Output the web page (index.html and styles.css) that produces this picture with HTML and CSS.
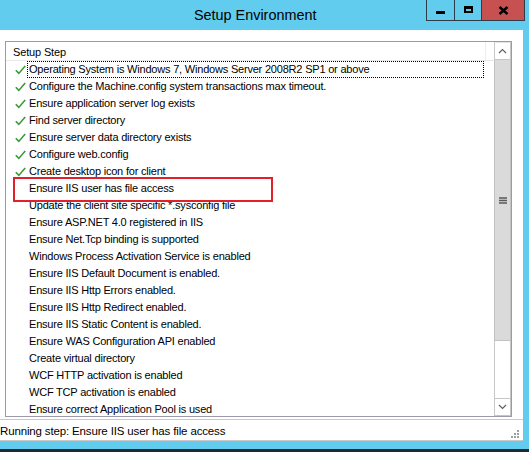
FILE: index.html
```
<!DOCTYPE html>
<html>
<head>
<meta charset="utf-8">
<link rel="stylesheet" href="styles.css">
</head>
<body>
<div class="window">
  <div class="titlebar">
    <div class="title">Setup Environment</div>
    <div class="caption-buttons">
      <div class="cbtn cbtn-min"><span class="min-glyph"></span></div>
      <div class="cbtn cbtn-max"><span class="max-glyph"></span></div>
      <div class="cbtn cbtn-close">
        <svg width="11" height="9" viewBox="0 0 11 9"><path d="M1.5 1 L9.5 8 M9.5 1 L1.5 8" stroke="#000" stroke-width="2.4" fill="none"/></svg>
      </div>
    </div>
  </div>
  <div class="client">
    <div class="listbox">
      <div class="list-main">
        <div class="header"><span class="header-text">Setup Step</span><span class="header-div"></span></div>
        <div class="rows">
          <div class="row"><span class="icon"><svg class="chk" width="11" height="10" viewBox="0 0 11 10"><path d="M0.8 5.2 L3.8 8.4 L10.2 1" stroke="#3a9a3a" stroke-width="1.6" fill="none"/></svg></span><span class="label focus">Operating System is Windows 7, Windows Server 2008R2 SP1 or above</span></div>
          <div class="row"><span class="icon"><svg class="chk" width="11" height="10" viewBox="0 0 11 10"><path d="M0.8 5.2 L3.8 8.4 L10.2 1" stroke="#3a9a3a" stroke-width="1.6" fill="none"/></svg></span><span class="label">Configure the Machine.config system transactions max timeout.</span></div>
          <div class="row"><span class="icon"><svg class="chk" width="11" height="10" viewBox="0 0 11 10"><path d="M0.8 5.2 L3.8 8.4 L10.2 1" stroke="#3a9a3a" stroke-width="1.6" fill="none"/></svg></span><span class="label">Ensure application server log exists</span></div>
          <div class="row"><span class="icon"><svg class="chk" width="11" height="10" viewBox="0 0 11 10"><path d="M0.8 5.2 L3.8 8.4 L10.2 1" stroke="#3a9a3a" stroke-width="1.6" fill="none"/></svg></span><span class="label">Find server directory</span></div>
          <div class="row"><span class="icon"><svg class="chk" width="11" height="10" viewBox="0 0 11 10"><path d="M0.8 5.2 L3.8 8.4 L10.2 1" stroke="#3a9a3a" stroke-width="1.6" fill="none"/></svg></span><span class="label">Ensure server data directory exists</span></div>
          <div class="row"><span class="icon"><svg class="chk" width="11" height="10" viewBox="0 0 11 10"><path d="M0.8 5.2 L3.8 8.4 L10.2 1" stroke="#3a9a3a" stroke-width="1.6" fill="none"/></svg></span><span class="label">Configure web.config</span></div>
          <div class="row"><span class="icon"><svg class="chk" width="11" height="10" viewBox="0 0 11 10"><path d="M0.8 5.2 L3.8 8.4 L10.2 1" stroke="#3a9a3a" stroke-width="1.6" fill="none"/></svg></span><span class="label">Create desktop icon for client</span></div>
          <div class="row"><span class="icon"></span><span class="label">Ensure IIS user has file access</span></div>
          <div class="row"><span class="icon"></span><span class="label">Update the client site specific *.sysconfig file</span></div>
          <div class="row"><span class="icon"></span><span class="label">Ensure ASP.NET 4.0 registered in IIS</span></div>
          <div class="row"><span class="icon"></span><span class="label">Ensure Net.Tcp binding is supported</span></div>
          <div class="row"><span class="icon"></span><span class="label">Windows Process Activation Service is enabled</span></div>
          <div class="row"><span class="icon"></span><span class="label">Ensure IIS Default Document is enabled.</span></div>
          <div class="row"><span class="icon"></span><span class="label">Ensure IIS Http Errors enabled.</span></div>
          <div class="row"><span class="icon"></span><span class="label">Ensure IIS Http Redirect enabled.</span></div>
          <div class="row"><span class="icon"></span><span class="label">Ensure IIS Static Content is enabled.</span></div>
          <div class="row"><span class="icon"></span><span class="label">Ensure WAS Configuration API enabled</span></div>
          <div class="row"><span class="icon"></span><span class="label">Create virtual directory</span></div>
          <div class="row"><span class="icon"></span><span class="label">WCF HTTP activation is enabled</span></div>
          <div class="row"><span class="icon"></span><span class="label">WCF TCP activation is enabled</span></div>
          <div class="row"><span class="icon"></span><span class="label">Ensure correct Application Pool is used</span></div>
        </div>
      </div>
      <div class="scrollbar">
        <div class="sb-btn sb-up"><svg width="9" height="6" viewBox="0 0 9 6"><path d="M1 5 L4.5 1.5 L8 5" stroke="#606060" stroke-width="1.2" fill="none"/></svg></div>
        <div class="sb-thumb"><svg width="8" height="7" viewBox="0 0 8 7"><path d="M0 1 H8 M0 3.5 H8 M0 6 H8" stroke="#5a5a5a" stroke-width="1.3"/></svg></div>
        <div class="sb-track"></div>
        <div class="sb-btn sb-down"><svg width="9" height="6" viewBox="0 0 9 6"><path d="M1 1 L4.5 4.5 L8 1" stroke="#606060" stroke-width="1.2" fill="none"/></svg></div>
      </div>
    </div>
    <div class="status">
      <span class="status-text">Running step: Ensure IIS user has file access</span>
      <svg class="grip" width="9" height="9" viewBox="0 0 9 9"><g fill="#a0a0a0"><rect x="6" y="0" width="2" height="2"/><rect x="3" y="3" width="2" height="2"/><rect x="6" y="3" width="2" height="2"/><rect x="0" y="6" width="2" height="2"/><rect x="3" y="6" width="2" height="2"/><rect x="6" y="6" width="2" height="2"/></g></svg>
    </div>
  </div>
  <div class="frame-bottom"></div>
  <div class="edge-dark"></div>
  <div class="annotation"></div>
</div>
</body>
</html>
```
FILE: styles.css
```
html, body {
  margin: 0;
  padding: 0;
}
body {
  width: 529px;
  height: 452px;
  overflow: hidden;
  font-family: "Liberation Sans", Arial, sans-serif;
  color: #000;
}
.window {
  position: relative;
  width: 529px;
  height: 452px;
  background: #62ccef;
  display: flex;
  flex-direction: column;
}
.titlebar {
  height: 30px;
  display: flex;
  align-items: flex-start;
  flex: none;
}
.title {
  margin-left: 194px;
  margin-top: 6px;
  font-size: 14.4px;
  line-height: 18px;
  color: #000;
}
.caption-buttons {
  margin-left: auto;
  margin-right: 4px;
  display: flex;
  height: 21px;
  box-sizing: border-box;
  border: 1px solid #2e3b48;
  border-top: none;
}
.cbtn {
  display: flex;
  align-items: center;
  justify-content: center;
  height: 20px;
  box-sizing: border-box;
}
.cbtn-min {
  width: 28px;
  border-right: 1px solid #2e3b48;
}
.cbtn-max {
  width: 27px;
  border-right: 1px solid #2e3b48;
}
.cbtn-close {
  width: 42px;
  background: #c75050;
}
.min-glyph {
  display: block;
  width: 9px;
  height: 3px;
  background: #000;
  margin-top: 5px;
}
.max-glyph {
  display: block;
  width: 9px;
  height: 7px;
  box-sizing: border-box;
  border: 2px solid #000;
  border-top-width: 3px;
  margin-top: -2px;
}
.client {
  width: 523px;
  height: 411px;
  background: #fff;
  flex: none;
  box-sizing: border-box;
  padding-top: 11px;
  display: flex;
  flex-direction: column;
}
.listbox {
  margin-left: 5px;
  width: 507px;
  height: 376px;
  box-sizing: border-box;
  border: 1px solid #9c99ad;
  display: flex;
  overflow: hidden;
}
.list-main {
  width: 488px;
  flex: none;
  overflow: hidden;
}
.header {
  height: 19px;
  box-sizing: border-box;
  border-bottom: 1px solid #e8e8e8;
  display: flex;
  align-items: center;
  font-size: 11px;
  letter-spacing: -0.15px;
}
.header-text {
  margin-left: 7px;
  margin-top: 2px;
}
.header-div {
  margin-left: auto;
  margin-right: 8px;
  width: 1px;
  height: 18px;
  background: #ececec;
}
.rows {
  display: flex;
  flex-direction: column;
}
.row {
  height: 17px;
  display: flex;
  align-items: center;
  font-size: 11px;
  letter-spacing: -0.2px;
  white-space: nowrap;
}
.icon {
  width: 21px;
  height: 17px;
  flex: none;
  display: flex;
  align-items: center;
}
.chk {
  margin-left: 9px;
  margin-top: 1px;
}
.label {
  padding-left: 2px;
  height: 17px;
  line-height: 17px;
  box-sizing: border-box;
}
.label.focus {
  border: 1px dotted #000;
  padding-left: 1px;
  width: 457px;
  line-height: 15px;
}
.scrollbar {
  width: 17px;
  flex: none;
  display: flex;
  flex-direction: column;
  background: #fff;
}
.sb-btn {
  height: 18px;
  flex: none;
  box-sizing: border-box;
  border: 1px solid #c6c6c6;
  display: flex;
  align-items: center;
  justify-content: center;
}
.sb-up {
  border-top-color: #e4e4e4;
}
.sb-thumb {
  height: 281px;
  flex: none;
  box-sizing: border-box;
  background: #dadada;
  border: 1px solid #c2c2c2;
  border-top: none;
  display: flex;
  justify-content: center;
  align-items: center;
}
.sb-track {
  flex: 1;
  box-sizing: border-box;
  border-left: 1px solid #c6c6c6;
  border-right: 1px solid #c6c6c6;
}
.status {
  margin-top: 2px;
  height: 22px;
  box-sizing: border-box;
  border-top: 1px solid #c9c9c9;
  border-bottom: 1px solid #c9c9c9;
  display: flex;
  align-items: center;
  position: relative;
}
.status-text {
  font-size: 11.5px;
  letter-spacing: -0.15px;
  margin-left: 0;
  margin-top: 1px;
  white-space: nowrap;
}
.grip {
  margin-left: auto;
  margin-right: 3px;
  align-self: flex-end;
  margin-bottom: 1px;
}
.frame-bottom {
  height: 8px;
  flex: none;
}
.edge-dark {
  height: 3px;
  flex: none;
  background: #1e2a33;
}
.annotation {
  position: absolute;
  left: 13px;
  top: 177px;
  width: 260px;
  height: 25px;
  box-sizing: border-box;
  border: 2px solid #e3202a;
}
```
